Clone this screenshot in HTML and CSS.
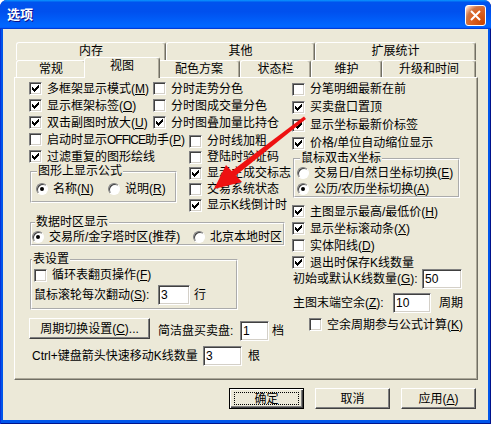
FILE: index.html
```html
<!DOCTYPE html>
<html lang="zh-CN">
<head>
    <meta charset="UTF-8">
    <title>选项</title>
    <link rel="stylesheet" href="styles.css">
</head>
<body>
<svg class="defs" width="0" height="0">
    <symbol id="tick" viewBox="0 0 11 11">
        <path d="M8 2h1v1H8z M7 3h2v1H7z M2 4h1v1H2z M6 4h3v1H6z M2 5h2v1H2z M5 5h3v1H5z M2 6h5v1H2z M3 7h3v1H3z M4 8h1v1H4z"/>
    </symbol>
</svg>

<div class="window">
    <div class="titlebar">
        <span class="title">选项</span>
        <span class="close">
            <svg width="11" height="11" viewBox="0 0 11 11"><path d="M1 1L10 10M10 1L1 10"/></svg>
        </span>
    </div>

    <div class="client">
        <!-- tab strip, two rows -->
        <div class="tabs">
            <div class="tab-row back">
                <div class="tab">内存</div>
                <div class="tab">其他</div>
                <div class="tab">扩展统计</div>
            </div>
            <div class="tab-row front">
                <div class="tab">常规</div>
                <div class="tab sel">视图</div>
                <div class="tab">配色方案</div>
                <div class="tab">状态栏</div>
                <div class="tab">维护</div>
                <div class="tab">升级和时间</div>
            </div>
        </div>

        <div class="page">
            <div class="col-left">
                <div class="grid3">
                    <label class="chk"><span class="cb"><svg><use href="#tick"/></svg></span><span>多框架显示模式(<u>M</u>)</span></label>
                    <label class="chk"><span class="cb"></span><span>分时走势分色</span></label>
                    <label class="chk"><span class="cb"><svg><use href="#tick"/></svg></span><span>显示框架标签(<u>O</u>)</span></label>
                    <label class="chk"><span class="cb"></span><span>分时图成交量分色</span></label>
                    <label class="chk"><span class="cb"><svg><use href="#tick"/></svg></span><span>双击副图时放大(<u>U</u>)</span></label>
                    <label class="chk"><span class="cb"><svg><use href="#tick"/></svg></span><span>分时图叠加量比持仓</span></label>
                </div>

                <div class="split">
                    <div class="sub-left">
                        <label class="chk"><span class="cb"></span><span>启动时显示<span class="en">OFFICE</span>助手(<u>P</u>)</span></label>
                        <label class="chk"><span class="cb"><svg><use href="#tick"/></svg></span><span>过滤重复的图形绘线</span></label>
                        <fieldset class="group g-formula">
                            <legend>图形上显示公式</legend>
                            <div class="radios">
                                <label class="opt"><span class="rb on"></span><span>名称(<u>N</u>)</span></label>
                                <label class="opt"><span class="rb"></span><span>说明(<u>R</u>)</span></label>
                            </div>
                        </fieldset>
                    </div>
                    <div class="sub-right">
                        <label class="chk"><span class="cb"></span><span>分时线加粗</span></label>
                        <label class="chk"><span class="cb"></span><span>登陆时验证码</span></label>
                        <label class="chk"><span class="cb"><svg><use href="#tick"/></svg></span><span>显示主成交标志</span></label>
                        <label class="chk"><span class="cb"></span><span>交易系统状态</span></label>
                        <label class="chk"><span class="cb"><svg><use href="#tick"/></svg></span><span>显示K线倒计时</span></label>
                    </div>
                </div>

                <fieldset class="group g-zone">
                    <legend>数据时区显示</legend>
                    <div class="radios">
                        <label class="opt"><span class="rb on"></span><span>交易所/金字塔时区(推荐)</span></label>
                        <label class="opt"><span class="rb"></span><span>北京本地时区</span></label>
                    </div>
                </fieldset>

                <fieldset class="group g-table">
                    <legend>表设置</legend>
                    <label class="chk"><span class="cb"></span><span>循环表翻页操作(<u>F</u>)</span></label>
                    <div class="field-row">
                        <span class="lbl w-wheel">鼠标滚轮每次翻动(<u>S</u>):</span>
                        <input class="num w32" type="text" value="3">
                        <span class="unit u4">行</span>
                    </div>
                </fieldset>

                <div class="row-btn">
                    <button class="btn wide">周期切换设置(<u>C</u>)...</button>
                    <span class="lbl w-simple">简洁盘买卖盘:</span>
                    <input class="num w29" type="text" value="1">
                    <span class="unit u3">档</span>
                </div>

                <div class="row-ctrl">
                    <span class="lbl w-ctrl">Ctrl+键盘箭头快速移动K线数量</span>
                    <input class="num w39" type="text" value="3">
                    <span class="unit u6">根</span>
                </div>
            </div>

            <div class="col-right">
                <label class="chk tall"><span class="cb"></span><span>分笔明细最新在前</span></label>
                <label class="chk tall"><span class="cb"><svg><use href="#tick"/></svg></span><span>买卖盘口置顶</span></label>
                <label class="chk tall"><span class="cb"><svg><use href="#tick"/></svg></span><span>显示坐标最新价标签</span></label>
                <label class="chk tall"><span class="cb"><svg><use href="#tick"/></svg></span><span>价格/单位自动缩位显示</span></label>

                <fieldset class="group g-mouse">
                    <legend>鼠标双击X坐标</legend>
                    <label class="opt"><span class="rb"></span><span>交易日/自然日坐标切换(<u>E</u>)</span></label>
                    <label class="opt"><span class="rb on"></span><span>公历/农历坐标切换(<u>A</u>)</span></label>
                </fieldset>

                <div class="checks">
                    <label class="chk"><span class="cb"><svg><use href="#tick"/></svg></span><span>主图显示最高/最低价(<u>H</u>)</span></label>
                    <label class="chk"><span class="cb"><svg><use href="#tick"/></svg></span><span>显示坐标滚动条(<u>X</u>)</span></label>
                    <label class="chk"><span class="cb"></span><span>实体阳线(<u>D</u>)</span></label>
                    <label class="chk"><span class="cb"><svg><use href="#tick"/></svg></span><span>退出时保存K线数量</span></label>
                </div>

                <div class="field-row r-init">
                    <span class="lbl w-init">初始或默认K线数量(<u>G</u>):</span>
                    <input class="num w40" type="text" value="50">
                </div>
                <div class="field-row r-tail">
                    <span class="lbl w-tail">主图末端空余(<u>Z</u>):</span>
                    <input class="num w38" type="text" value="10">
                    <span class="unit u8">周期</span>
                </div>
                <label class="chk r-spare"><span class="cb"></span><span>空余周期参与公式计算(<u>K</u>)</span></label>
            </div>
        </div>

        <div class="buttons">
            <button class="btn dlg default"><span class="focus">确定</span></button>
            <button class="btn dlg">取消</button>
            <button class="btn dlg">应用(<u>A</u>)</button>
        </div>
    </div>

    <!-- red annotation arrow drawn over the dialog -->
    <svg class="arrow" width="491" height="424" viewBox="0 0 491 424">
        <polygon points="234.5,176.5 231,171.5 304,116.5 306,119"/>
        <polygon points="214,189 226,165 242,182"/>
    </svg>
</div>
</body>
</html>
```

FILE: styles.css
```css
* {
    box-sizing: border-box;
}

body {
    margin: 0;
    font: 12px/14px "Liberation Sans", "Noto Sans CJK SC", "Noto Sans CJK TC", sans-serif;
    color: #000;
    background: #fff;
    text-autospace: no-autospace;
}

.defs {
    display: block;
    width: 0;
    height: 0;
}

u {
    text-decoration-thickness: 1px;
    text-underline-offset: 1px;
}

.en {
    letter-spacing: -1px;
}

/* window frame */
.window {
    position: relative;
    width: 491px;
    height: 424px;
    display: flex;
    flex-direction: column;
    background: #0055ea;
    border-radius: 7px 7px 0 0;
    box-shadow: inset 1px 0 #0831d9, inset -1px -1px #00138c;
    overflow: hidden;
}

.titlebar {
    height: 29px;
    flex: none;
    display: flex;
    justify-content: space-between;
    align-items: flex-start;
    padding: 5px 5px 0 7px;
    border-radius: 7px 7px 0 0;
    background: linear-gradient(180deg, #0997ff, #0053ee 8%, #0050ee 40%, #0066ff 88%, #0066ff 93%, #005bff 95%, #003dd7 96%, #003dd7);
}

.title {
    color: #fff;
    font-weight: bold;
    font-size: 13px;
    line-height: 20px;
    text-shadow: 1px 1px #0f1089;
}

.close {
    width: 21px;
    height: 21px;
    display: flex;
    align-items: center;
    justify-content: center;
    border: 1px solid #fff;
    border-radius: 3px;
    background: radial-gradient(circle at 90% 90%, #cc4600 0, #dc6527 55%, #cd7546 70%, #ffccb2 90%, #fff 100%);
}

    .close path {
        stroke: #fff;
        stroke-width: 2;
        fill: none;
    }

.client {
    flex: 1;
    margin: 0 3px 4px;
    padding: 13px 10px 0 11px;
    background: #ece9d8;
}

/* tabs */
.tabs {
    margin: 0 2px;
}

.tab-row {
    display: grid;
}

    .tab-row.back {
        grid-template-columns: 150px 149px 161px;
        height: 18px;
    }

    .tab-row.front {
        grid-template-columns: 70px 72px 82px 71px 71px 94px;
        height: 17px;
        align-items: start;
    }

.tab {
    display: flex;
    justify-content: center;
    align-items: center;
    height: 18px;
    padding-bottom: 1px;
    background: #ece9d8;
    border: 1px solid;
    border-bottom: 0;
    border-color: #fff #716f64 #716f64 #fff;
    border-radius: 3px 3px 0 0;
    box-shadow: inset -1px 0 #aca899;
    white-space: nowrap;
}

.front .tab {
    height: 17px;
}

    .front .tab.sel {
        position: relative;
        z-index: 1;
        height: 21px;
        margin: -3px -2px -1px;
        padding-bottom: 4px;
    }

/* tab page */
.page {
    height: 303px;
    display: flex;
    padding: 2px 0 0 14px;
    border: 1px solid;
    border-color: #fff #716f64 #716f64 #fff;
    box-shadow: inset -1px -1px #aca899;
}

.col-left {
    width: 262px;
    flex: none;
}

.col-right {
    flex: 1;
    padding-left: 1px;
}

.chk {
    display: flex;
    align-items: center;
    height: 17px;
    white-space: nowrap;
}

    .chk.tall {
        height: 18px;
    }

.cb {
    flex: none;
    width: 13px;
    height: 13px;
    margin-right: 5px;
    border: 1px solid;
    border-color: #808080 #fff #fff #808080;
    box-shadow: inset 1px 1px #404040, inset -1px -1px #d4d0c8;
    background: #fff;
}

    .cb svg {
        display: block;
        width: 11px;
        height: 11px;
        fill: #000;
    }

.opt {
    display: flex;
    align-items: center;
    white-space: nowrap;
}

.rb {
    flex: none;
    width: 12px;
    height: 12px;
    margin-right: 5px;
    display: flex;
    align-items: center;
    justify-content: center;
    border: 1px solid;
    border-color: #808080 #fff #fff #808080;
    border-radius: 50%;
    box-shadow: inset 1px 1px #404040;
    background: #fff;
}

    .rb.on::after {
        content: "";
        width: 4px;
        height: 4px;
        border-radius: 50%;
        background: #000;
    }

/* group boxes */
.group {
    margin: 0;
    padding: 0 2px;
    min-width: 0;
    border: 2px groove #fff;
}

    .group legend {
        margin-left: 3px;
        padding: 0 1px;
        line-height: 13px;
    }

.radios {
    display: flex;
    align-items: center;
}

.grid3 {
    display: grid;
    grid-template-columns: 124px 1fr;
    grid-auto-rows: 17px;
}

.split {
    display: flex;
}

.sub-left {
    width: 160px;
    flex: none;
}

.sub-right {
    padding-top: 2px;
}

    .sub-right .chk {
        height: 16px;
    }

.g-formula {
    width: 147px;
    margin-left: 1px;
    padding-bottom: 4px;
}

    .g-formula .radios {
        height: 16px;
        margin-top: 3px;
        padding-left: 2px;
    }

        .g-formula .radios .opt:first-child {
            width: 72px;
        }

.g-zone {
    width: 255px;
    margin: 3px 0 0 1px;
    padding: 0;
}

    .g-zone .radios {
        height: 15px;
    }

        .g-zone .radios .opt:first-child {
            width: 161px;
        }

.g-table {
    width: 208px;
    margin: 7px 0 0 1px;
    padding-bottom: 3px;
}

    .g-table legend {
        margin-left: -2px;
    }

    .g-table .chk {
        height: 16px;
        margin-top: 1px;
    }

    .g-table .field-row {
        margin-top: 2px;
    }

.field-row {
    display: flex;
    align-items: center;
    height: 20px;
    white-space: nowrap;
}

.lbl {
    flex: none;
    white-space: nowrap;
}

.w-wheel { width: 124px; }
.w-simple { width: 82px; margin: 3px 0 0 8px; line-height: 20px; }
.w-ctrl { width: 171px; margin-left: 3px; }
.w-init { width: 130px; padding-left: 1px; }
.w-tail { width: 101px; padding-left: 1px; }

.num {
    flex: none;
    height: 20px;
    margin: 0;
    padding: 0 2px;
    font: inherit;
    color: #000;
    background: #fff;
    border: 1px solid;
    border-color: #808080 #fff #fff #808080;
    box-shadow: inset 1px 1px #404040, inset -1px -1px #d4d0c8;
    outline: none;
}

.w29 { width: 29px; }
.w32 { width: 32px; }
.w38 { width: 38px; }
.w39 { width: 39px; }
.w40 { width: 40px; }

.unit { flex: none; }
.u3 { margin-left: 3px; }
.u4 { margin-left: 4px; }
.u6 { margin-left: 6px; }
.u8 { margin-left: 8px; }

.row-btn {
    display: flex;
    align-items: flex-start;
    height: 24px;
    margin-top: 8px;
    white-space: nowrap;
}

    .row-btn .num,
    .row-btn .unit {
        margin-top: 3px;
        line-height: 20px;
    }

.row-ctrl {
    display: flex;
    align-items: center;
    height: 20px;
    margin-top: 4px;
    white-space: nowrap;
}

/* right column */
.g-mouse {
    width: 167px;
    margin: 0 0 0 1px;
}

    .g-mouse .opt {
        height: 16px;
    }

        .g-mouse .opt:last-child {
            height: 15px;
        }

.checks {
    margin-top: 5px;
}

.r-init {
    margin-top: -2px;
}

.r-tail {
    margin-top: 4px;
}

.r-spare {
    margin: 3px 0 0 17px;
}

/* push buttons */
.btn {
    display: flex;
    align-items: center;
    justify-content: center;
    height: 21px;
    padding: 0;
    font: inherit;
    color: #000;
    background: #ece9d8;
    border: 1px solid;
    border-color: #fff #404040 #404040 #fff;
    box-shadow: inset -1px -1px #808080;
    white-space: nowrap;
}

    .btn.wide {
        width: 121px;
        flex: none;
    }

.buttons {
    display: flex;
    justify-content: flex-end;
    gap: 11px;
    margin-top: 8px;
    padding-right: 2px;
}

.btn.dlg {
    width: 75px;
}

.btn.default {
    border: 1px solid #000;
    box-shadow: inset 1px 1px #fff, inset -1px -1px #404040, inset -2px -2px #808080;
}

.focus {
    display: flex;
    align-items: center;
    justify-content: center;
    width: 65px;
    height: 13px;
    border: 1px dotted #000;
}

/* annotation */
.arrow {
    position: absolute;
    left: 0;
    top: 0;
    pointer-events: none;
}

    .arrow polygon {
        fill: #ee1111;
    }
```
